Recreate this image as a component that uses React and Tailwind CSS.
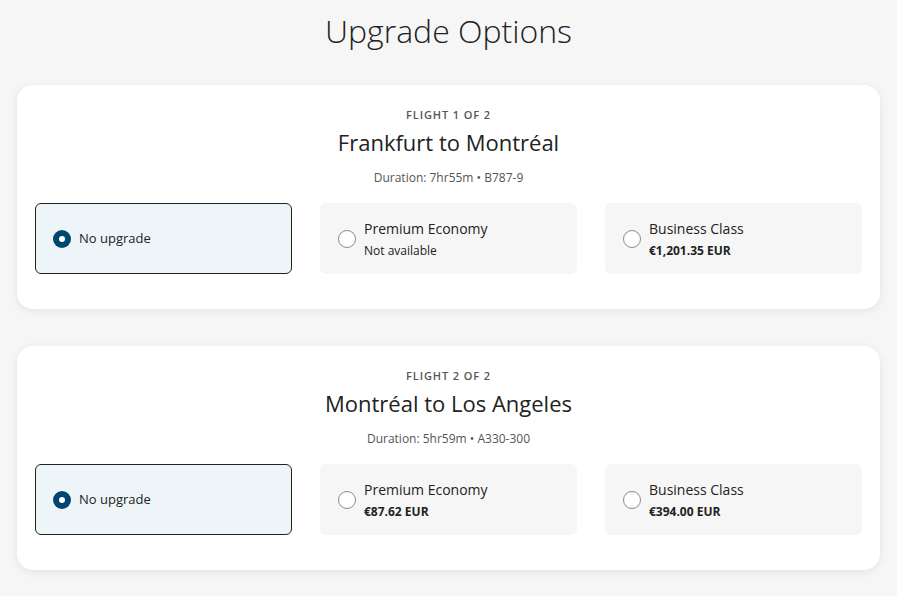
import React, { useState } from 'react';

const flights = [
    {
        id: 1,
        label: 'Flight 1 of 2',
        route: 'Frankfurt to Montréal',
        duration: 'Duration: 7hr55m • B787-9',
        options: [
            { key: 'none', name: 'No upgrade' },
            { key: 'premium', name: 'Premium Economy', note: 'Not available' },
            { key: 'business', name: 'Business Class', price: '€1,201.35 EUR' },
        ],
    },
    {
        id: 2,
        label: 'Flight 2 of 2',
        route: 'Montréal to Los Angeles',
        duration: 'Duration: 5hr59m • A330-300',
        options: [
            { key: 'none', name: 'No upgrade' },
            { key: 'premium', name: 'Premium Economy', price: '€87.62 EUR' },
            { key: 'business', name: 'Business Class', price: '€394.00 EUR' },
        ],
    },
];

const Radio = ({ checked }) =>
    checked ? (
        <span className="w-[18px] h-[18px] rounded-full bg-[#00466e] flex items-center justify-center shrink-0">
            <span className="w-[6px] h-[6px] rounded-full bg-white" />
        </span>
    ) : (
        <span className="w-[18px] h-[18px] rounded-full border border-[#8a8a8a] bg-white shrink-0" />
    );

const Option = ({ option, selected, onSelect }) => (
    <button
        onClick={onSelect}
        className={`h-[71px] rounded-[6px] flex items-center gap-2 px-[17px] text-left ${
            selected ? 'bg-[#eef5f9] border border-[#222]' : 'bg-[#f6f6f6] border border-transparent'
        }`}
    >
        <Radio checked={selected} />
        {selected ? (
            <span className="text-[13px] text-[#222]">{option.name}</span>
        ) : (
            <div className="flex flex-col pt-[2px]">
                <span className="text-[14px] leading-[22px] text-[#222]">{option.name}</span>
                {option.note && <span className="text-[12px] leading-[22px] text-[#222]">{option.note}</span>}
                {option.price && (
                    <span className="text-[12px] leading-[22px] font-bold text-[#222]">{option.price}</span>
                )}
            </div>
        )}
    </button>
);

const FlightCard = ({ flight }) => {
    const [choice, setChoice] = useState('none');
    return (
        <div className="bg-white rounded-[16px] shadow-[0_2px_8px_rgba(0,0,0,0.08)] px-[18px] pt-[22px] pb-[35px]">
            <div className="flex flex-col items-center">
                <div className="text-[11px] leading-[16px] font-semibold tracking-[0.08em] uppercase text-[#555]">
                    {flight.label}
                </div>
                <div className="text-[22px] leading-[30px] text-[#222] mt-[4px]">{flight.route}</div>
                <div className="text-[12px] leading-[18px] text-[#555] mt-[12px]">{flight.duration}</div>
            </div>
            <div className="grid grid-cols-3 gap-[28px] mt-[16px]">
                {flight.options.map((o) => (
                    <Option key={o.key} option={o} selected={choice === o.key} onSelect={() => setChoice(o.key)} />
                ))}
            </div>
        </div>
    );
};

export default function App() {
    return (
        <div className="min-h-screen bg-[#f6f6f6] font-['Open_Sans',sans-serif] px-[17px] pb-[25px]">
            <h1 className="text-[32px] leading-[44px] font-light text-[#222] text-center pt-[9px]">Upgrade Options</h1>
            <div className="flex flex-col gap-[37px] mt-[32px]">
                {flights.map((f) => (
                    <FlightCard key={f.id} flight={f} />
                ))}
            </div>
        </div>
    );
}
